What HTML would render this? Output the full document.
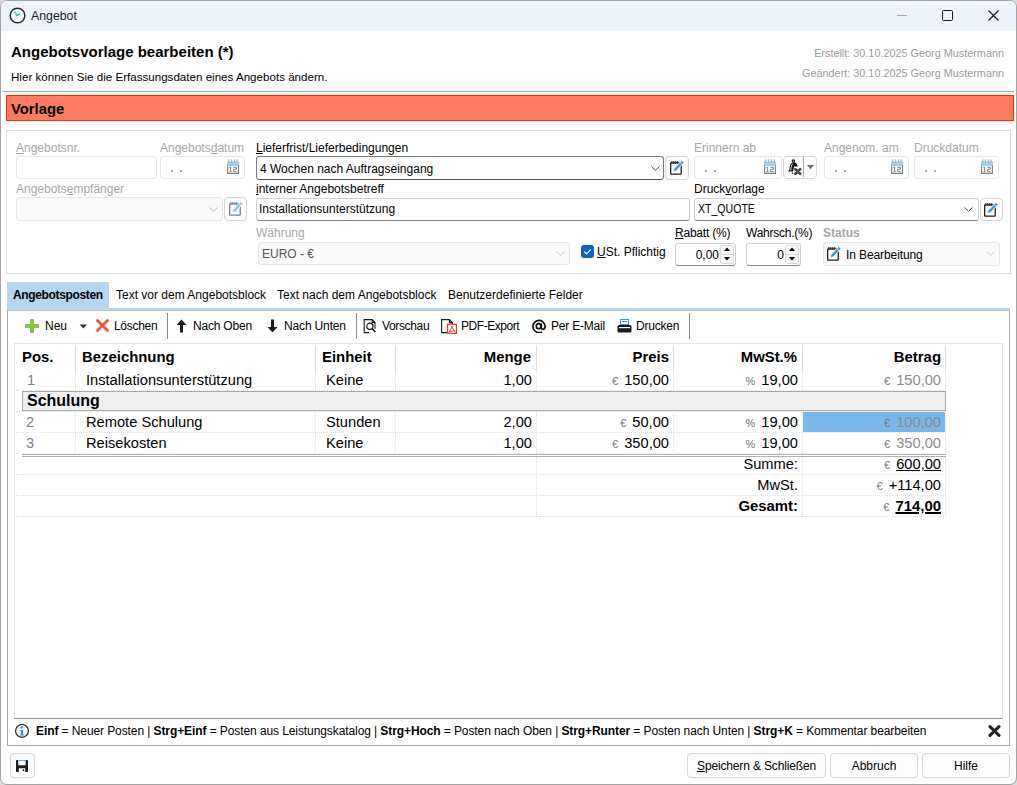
<!DOCTYPE html>
<html><head><meta charset="utf-8">
<style>
*{box-sizing:border-box;margin:0;padding:0}
html,body{width:1017px;height:785px;overflow:hidden;background:#dcdcdc}
body{font-family:"Liberation Sans",sans-serif;font-size:12px;color:#000;position:relative}
.a{position:absolute;white-space:nowrap}
#win{position:absolute;left:0;top:0;width:1017px;height:785px;background:#fff;border:1px solid #9a9a9a;border-radius:8px;overflow:hidden}
#tb{position:absolute;left:0;top:0;width:1015px;height:30px;background:#eef3f9}
.lbl{position:absolute;white-space:nowrap;font-size:12px;line-height:14px}
.dis{color:#a6a6a6}
.inp{position:absolute;border:1px solid #e8e8e8;border-radius:3px;background:#fff}
.inpd{position:absolute;border:1px solid #e6e6e6;border-radius:3px;background:#f9f9f9}
.act{position:absolute;border:1px solid #d0d0d0;border-bottom:1px solid #868686;border-radius:3px;background:#fff}
.btn{position:absolute;border:1px solid #d6d6d6;border-radius:4px;background:#fdfdfd}
.txt{position:absolute;white-space:nowrap;font-size:12px;line-height:14px}
u{text-decoration:underline;text-underline-offset:1px}
.g{position:absolute;white-space:nowrap;font-size:14.67px;line-height:16px}
.gb{font-weight:bold;font-size:14.9px}
.hl{position:absolute;height:0;border-top:1px dotted #e0e0e0}
.vl{position:absolute;width:0;border-left:1px dotted #e0e0e0}
.eur{font-size:11px;color:#777;margin-right:6px}
</style></head><body>
<div id="frame" style="position:absolute;left:0;top:0;width:1017px;height:785px;border:1px solid #a3a3a3;border-radius:7px;background:#fff;overflow:hidden">
  <div style="position:absolute;left:0;top:0;width:1015px;height:30px;background:#eef3f9"></div>
</div>
<!-- title bar -->
<svg class="a" style="left:9px;top:7px" width="17" height="17" viewBox="0 0 17 17"><circle cx="8.5" cy="8.5" r="7.3" fill="#fff" stroke="#1f2b33" stroke-width="1.5"/><path d="M5.6 4.6 L8 8.6 L11 6.6" fill="none" stroke="#3ab1c2" stroke-width="1.4"/></svg>
<div class="a" style="left:31px;top:9px;font-size:12.3px;line-height:14px;color:#1a1a1a">Angebot</div>
<div class="a" style="left:897px;top:15px;width:10px;height:1px;background:#a8a8a8"></div>
<div class="a" style="left:942px;top:10px;width:10.5px;height:10.5px;border:1.3px solid #1a1a1a;border-radius:1.5px"></div>
<svg class="a" style="left:988px;top:10px" width="11" height="11" viewBox="0 0 11 11"><path d="M0.5 0.5 L10.5 10.5 M10.5 0.5 L0.5 10.5" stroke="#1a1a1a" stroke-width="1.2"/></svg>
<!-- header -->
<div class="a" style="left:11px;top:43px;font-size:15px;line-height:17px;font-weight:bold;color:#000">Angebotsvorlage bearbeiten (*)</div>
<div class="a" style="left:11px;top:70px;font-size:11.6px;line-height:13px;color:#000">Hier können Sie die Erfassungsdaten eines Angebots ändern.</div>
<div class="a" style="right:13px;top:47px;font-size:10.85px;line-height:12px;color:#9a9a9a;text-align:right">Erstellt: 30.10.2025 Georg Mustermann</div>
<div class="a" style="right:13px;top:67px;font-size:10.85px;line-height:12px;color:#9a9a9a;text-align:right">Geändert: 30.10.2025 Georg Mustermann</div>
<div class="a" style="left:3px;top:91px;width:1011px;height:1px;background:#a8a8a8"></div>
<!-- Vorlage bar -->
<div class="a" style="left:6px;top:95px;width:1008px;height:26px;background:#ff7a62;border:1px solid #ff2a00"></div>
<div class="a" style="left:11px;top:101px;font-size:14.8px;line-height:16px;font-weight:bold;color:#000">Vorlage</div>

<!-- group box -->
<div class="a" style="left:6px;top:130px;width:1005px;height:144px;border:1px solid #dcdcdc;border-radius:0"></div>
<!-- row1 labels -->
<div class="lbl dis" style="left:16px;top:141px"><u>A</u>ngebotsnr.</div>
<div class="lbl dis" style="left:160px;top:141px">Angebots<u>d</u>atum</div>
<div class="lbl" style="left:256px;top:141px"><u>L</u>ieferfrist/Lieferbedingungen</div>
<div class="lbl dis" style="left:694px;top:141px">Erinnern ab</div>
<div class="lbl dis" style="left:824px;top:141px">Angenom. am</div>
<div class="lbl dis" style="left:914px;top:141px">Druckdatum</div>
<!-- row1 inputs -->
<div class="inp" style="left:16px;top:156px;width:141px;height:23px"></div>
<div class="inp" style="left:160px;top:156px;width:85px;height:23px"></div>
<div class="act" style="left:256px;top:156px;width:408px;height:24px;border-color:#7a7a7a;border-bottom-color:#5a5a5a"></div>
<div class="txt" style="left:260px;top:162px">4 Wochen nach Auftragseingang</div>
<div class="btn" style="left:665px;top:156px;width:24px;height:24px"></div>
<div class="inp" style="left:694px;top:156px;width:88px;height:23px"></div>
<div class="btn" style="left:783px;top:156px;width:34px;height:23px"></div>
<div class="inp" style="left:824px;top:156px;width:85px;height:23px"></div>
<div class="inp" style="left:914px;top:156px;width:85px;height:23px"></div>
<!-- row2 -->
<div class="lbl dis" style="left:16px;top:182px">Angebots<u>e</u>mpfänger</div>
<div class="lbl" style="left:256px;top:182px"><u>i</u>nterner Angebotsbetreff</div>
<div class="lbl" style="left:694px;top:182px">Druck<u>v</u>orlage</div>
<div class="inpd" style="left:16px;top:197px;width:207px;height:24px"></div>
<div class="btn" style="left:224px;top:197px;width:23px;height:24px"></div>
<div class="act" style="left:256px;top:198px;width:434px;height:23px"></div>
<div class="txt" style="left:259px;top:202px">Installationsunterstützung</div>
<div class="act" style="left:694px;top:198px;width:285px;height:23px"></div>
<div class="txt" style="left:698px;top:202px;transform:scaleX(0.88);transform-origin:0 0">XT_QUOTE</div>
<div class="btn" style="left:980px;top:198px;width:23px;height:23px"></div>
<!-- row3 -->
<div class="lbl dis" style="left:256px;top:226px">Währung</div>
<div class="lbl" style="left:675px;top:226px;letter-spacing:-0.22px"><u>R</u>abatt (%)</div>
<div class="lbl" style="left:746px;top:226px;letter-spacing:-0.25px">Wahrsch.(%)</div>
<div class="lbl dis" style="left:823px;top:226px;font-weight:bold">Status</div>
<div class="inpd" style="left:258px;top:242px;width:312px;height:23px"></div>
<div class="txt" style="left:262px;top:247px;color:#555">EURO - €</div>
<div class="a" style="left:581px;top:245px;width:13px;height:13px;background:#0f62c6;border-radius:3px"></div>
<svg class="a" style="left:581px;top:245px" width="13" height="13" viewBox="0 0 13 13"><path d="M3.2 6.6 L5.5 8.8 L9.8 4.4" fill="none" stroke="#fff" stroke-width="1.2"/></svg>
<div class="lbl" style="left:597px;top:245px"><u>U</u>St. Pflichtig</div>
<div class="act" style="left:675px;top:243px;width:61px;height:23px"></div>
<div class="txt" style="left:675px;top:248px;width:44px;text-align:right">0,00</div>
<div class="act" style="left:746px;top:243px;width:55px;height:23px"></div>
<div class="txt" style="left:746px;top:248px;width:38px;text-align:right">0</div>
<div class="inpd" style="left:823px;top:242px;width:177px;height:24px"></div>
<div class="txt" style="left:846px;top:248px;letter-spacing:-0.1px">In Bearbeitung</div>
<svg width="0" height="0" style="position:absolute">
 <defs>
  <g id="cal">
   <rect x="0" y="2.5" width="12" height="4.5" fill="#9fd0f0"/>
   <path d="M0.6 6.5 V14.4 H11.4 V6.5" fill="none" stroke="#7c7c7c" stroke-width="1.1"/>
   <path d="M1.9 0.3V3.6 M4.6 0.3V3.6 M7.4 0.3V3.6 M10.1 0.3V3.6" stroke="#8a8a8a" stroke-width="0.75"/>
   <path d="M2.4 8.6 L3.6 8 V12.6 M2.5 12.6 H4.7 M6.3 8.3 H9.3 V10.3 H6.6 V12.6 H9.6" fill="none" stroke="#808080" stroke-width="1"/>
  </g>
  <g id="edit">
   <path d="M6.3 6.85 H15.6 Q16.25 6.85 16.25 7.5 V17.5 Q16.25 18.15 15.6 18.15 H6.3 Q5.65 18.15 5.65 17.5 V7.5 Q5.65 6.85 6.3 6.85 Z" fill="#fff" stroke="#1e1e1e" stroke-width="1.3"/>
   <path d="M6.9 5 V7.8 M8.8 5 V7.8 M10.8 5 V7.8 M12.7 5 V7.8" stroke="#1e1e1e" stroke-width="1"/>
   <path d="M8.3 15.7 L9.04 12.6 L16.84 4.4 L19.16 6.6 L11.36 14.8 Z" fill="#3c9ad8" stroke="#fff" stroke-width="0.8" stroke-linejoin="round"/>
   <path d="M14.9 6.44 L17.2 8.64" stroke="#fff" stroke-width="0.7"/>
  </g>
  <g id="chev"><path d="M0.5 0.5 L4.5 4.3 L8.5 0.5" fill="none" stroke-width="1"/></g>
 </defs>
</svg>
<!-- calendars -->
<svg class="a" style="left:227px;top:159px" width="12" height="15"><use href="#cal"/></svg>
<svg class="a" style="left:764px;top:159px" width="12" height="15"><use href="#cal"/></svg>
<svg class="a" style="left:891px;top:159px" width="12" height="15"><use href="#cal"/></svg>
<svg class="a" style="left:981px;top:159px" width="12" height="15"><use href="#cal"/></svg>
<!-- date dots -->
<div class="a" style="left:171px;top:170px;width:2px;height:2px;background:#8c8aa6;border-radius:1px"></div>
<div class="a" style="left:180px;top:170px;width:2px;height:2px;background:#8c8aa6;border-radius:1px"></div>
<div class="a" style="left:705px;top:170px;width:2px;height:2px;background:#8c8aa6;border-radius:1px"></div>
<div class="a" style="left:714px;top:170px;width:2px;height:2px;background:#8c8aa6;border-radius:1px"></div>
<div class="a" style="left:835px;top:170px;width:2px;height:2px;background:#8c8aa6;border-radius:1px"></div>
<div class="a" style="left:844px;top:170px;width:2px;height:2px;background:#8c8aa6;border-radius:1px"></div>
<div class="a" style="left:925px;top:170px;width:2px;height:2px;background:#8c8aa6;border-radius:1px"></div>
<div class="a" style="left:934px;top:170px;width:2px;height:2px;background:#8c8aa6;border-radius:1px"></div>
<!-- edit icons -->
<svg class="a" style="left:665px;top:156px" width="24" height="24"><use href="#edit"/></svg>
<svg class="a" style="left:224px;top:197px" width="24" height="24" opacity="0.55"><use href="#edit"/></svg>
<svg class="a" style="left:979px;top:198px" width="24" height="24"><use href="#edit"/></svg>
<svg class="a" style="left:822px;top:242px" width="24" height="24"><use href="#edit"/></svg>
<!-- chevrons -->
<svg class="a" style="left:651px;top:166px" width="9" height="6" stroke="#505050"><use href="#chev"/></svg>
<svg class="a" style="left:209px;top:207px" width="9" height="6" stroke="#b8b8b8"><use href="#chev"/></svg>
<svg class="a" style="left:964px;top:207px" width="9" height="6" stroke="#505050"><use href="#chev"/></svg>
<svg class="a" style="left:556px;top:251px" width="9" height="6" stroke="#c8c8c8"><use href="#chev"/></svg>
<svg class="a" style="left:986px;top:251px" width="9" height="6" stroke="#c8c8c8"><use href="#chev"/></svg>
<!-- bell button -->
<div class="a" style="left:803px;top:157px;width:1px;height:20px;background:#a8a8a8"></div>
<svg class="a" style="left:785px;top:157px" width="18" height="20" viewBox="0 0 18 20"><path d="M8.4 5.3 C5.6 5.5 5 8.5 4.5 11.5 C4.2 13.2 3.8 13.8 3 14.5 H8 L9 9.4 H12.7 C12.3 7 10.8 5.3 8.4 5.3 Z" fill="#111"/><path d="M7.6 6.7 C6.4 8 6 11 5.7 13.6" stroke="#fff" stroke-width="0.9" fill="none"/><circle cx="8.4" cy="4.1" r="1.2" fill="#fff" stroke="#111" stroke-width="1.1"/><circle cx="7.4" cy="16.2" r="0.7" fill="#111"/><path d="M10.3 12.1 L15.2 16.8 M15.2 12.1 L10.3 16.8" stroke="#4a4a4a" stroke-width="2.7" stroke-linecap="round"/></svg>
<svg class="a" style="left:807px;top:165px" width="8" height="5"><path d="M0 0 H7 L3.5 4.2 Z" fill="#707070"/></svg>
<!-- spin buttons -->
<div class="a" style="left:720px;top:245px;width:14px;height:19px;border:1px solid #dadada;border-radius:2px;background:#fafafa"></div>
<div class="a" style="left:720px;top:254px;width:14px;height:1px;background:#dadada"></div>
<svg class="a" style="left:723px;top:247px" width="8" height="15"><path d="M1 4 L4 0.6 L7 4 Z M1 10 L4 13.4 L7 10 Z" fill="#000"/></svg>
<div class="a" style="left:785px;top:245px;width:14px;height:19px;border:1px solid #dadada;border-radius:2px;background:#fafafa"></div>
<div class="a" style="left:785px;top:254px;width:14px;height:1px;background:#dadada"></div>
<svg class="a" style="left:788px;top:247px" width="8" height="15"><path d="M1 4 L4 0.6 L7 4 Z M1 10 L4 13.4 L7 10 Z" fill="#000"/></svg>
<!-- tabs -->
<div class="a" style="left:7px;top:282px;width:102px;height:27px;background:#b5d6f0"></div>
<div class="a" style="left:7px;top:308px;width:1003px;height:2px;background:#b5d6f0"></div><div class="a" style="left:7px;top:310px;width:1003px;height:1px;background:#c4c4c4"></div>
<div class="a" style="left:13px;top:288px;font-size:12px;line-height:14px;font-weight:bold;letter-spacing:-0.35px">Angebotsposten</div>
<div class="a" style="left:116px;top:288px;font-size:12px;line-height:14px">Text vor dem Angebotsblock</div>
<div class="a" style="left:277px;top:288px;font-size:12px;line-height:14px">Text nach dem Angebotsblock</div>
<div class="a" style="left:448px;top:288px;font-size:12px;line-height:14px">Benutzerdefinierte Felder</div>
<!-- panel -->
<div class="a" style="left:7px;top:311px;width:1003px;height:435px;border:1px solid #a8a8a8;border-top:none"></div>
<!-- toolbar -->
<svg class="a" style="left:25px;top:319px" width="14" height="14"><path d="M5 0 H9 V5 H14 V9 H9 V14 H5 V9 H0 V5 H5 Z" fill="#8cbf4a"/></svg>
<div class="a" style="left:45px;top:319px;font-size:12px;line-height:14px">Neu</div>
<svg class="a" style="left:79px;top:324px" width="9" height="5"><path d="M0.5 0.5 H8 L4.25 4.5 Z" fill="#333"/></svg>
<svg class="a" style="left:96px;top:319px" width="13" height="13"><path d="M1.5 1.5 L11.5 11.5 M11.5 1.5 L1.5 11.5" stroke="#f0533a" stroke-width="2.8" stroke-linecap="round"/></svg>
<div class="a" style="left:114px;top:319px;font-size:12px;line-height:14px;letter-spacing:-0.3px">Löschen</div>
<div class="a" style="left:167px;top:313px;width:1px;height:26px;background:#888"></div>
<svg class="a" style="left:176px;top:319px" width="11" height="14"><path d="M5.5 0.5 L10.5 6 L7 6 V13.5 H4 V6 H0.5 Z" fill="#1a1a1a"/></svg>
<div class="a" style="left:193px;top:319px;font-size:12px;line-height:14px;letter-spacing:-0.2px">Nach Oben</div>
<svg class="a" style="left:267px;top:319px" width="11" height="14"><path d="M5.5 13.5 L10.5 8 L7 8 V0.5 H4 V8 H0.5 Z" fill="#1a1a1a"/></svg>
<div class="a" style="left:284px;top:319px;font-size:12px;line-height:14px;letter-spacing:-0.15px">Nach Unten</div>
<div class="a" style="left:356px;top:313px;width:1px;height:26px;background:#888"></div>
<svg class="a" style="left:363px;top:319px" width="14" height="15" viewBox="0 0 14 15"><path d="M6 13.6 H1.2 V0.6 H9.2 L12 3.4 V9.8 M9.2 0.6 V3.4 H12" fill="none" stroke="#1a1a1a" stroke-width="1.1"/><circle cx="6.9" cy="7.3" r="3.1" fill="#fff" stroke="#1a1a1a" stroke-width="1.2"/><path d="M9.1 9.5 L12.3 13" stroke="#1a1a1a" stroke-width="1.7"/></svg>
<div class="a" style="left:382px;top:319px;font-size:12px;line-height:14px;letter-spacing:-0.35px">Vorschau</div>
<svg class="a" style="left:441px;top:319px" width="16" height="15" viewBox="0 0 16 15"><path d="M6 13.6 H0.6 V0.6 H8.4 L11.4 3.6 V5 M8.4 0.6 V3.6 H11.4" fill="none" stroke="#1a1a1a" stroke-width="1.1"/><rect x="6.6" y="5.3" width="8.8" height="9" fill="#fff" stroke="#e02828" stroke-width="1.1"/><path d="M8.2 13 C9.6 11.2 10.6 9.2 11 7 C11.4 9.5 12.6 11.2 14.2 12 C12.4 11.6 10.2 12 8.2 13 Z" fill="none" stroke="#e02828" stroke-width="0.9"/></svg>
<div class="a" style="left:461px;top:319px;font-size:12px;line-height:14px;letter-spacing:-0.45px">PDF-Export</div>
<svg class="a" style="left:532px;top:319px" width="14" height="14" viewBox="0 0 14 14"><path d="M10 12.9 A6.1 6.1 0 1 1 13.1 7 Q13.1 10.3 10.9 10.3 Q9.3 10.3 9.3 8.6 V4.2" fill="none" stroke="#111" stroke-width="1.7"/><ellipse cx="6.6" cy="7.2" rx="2.3" ry="2.5" fill="none" stroke="#111" stroke-width="1.7"/></svg>
<div class="a" style="left:551px;top:319px;font-size:12px;line-height:14px;letter-spacing:-0.2px">Per E-Mail</div>
<svg class="a" style="left:617px;top:319px" width="15" height="14" viewBox="0 0 15 14"><rect x="3.5" y="0.5" width="8" height="5" fill="#fff" stroke="#3c9ad8"/><path d="M5 2.5 H10" stroke="#3c9ad8"/><rect x="0.5" y="6" width="14" height="7.5" rx="1.5" fill="#1a1a1a"/><rect x="2" y="8" width="11" height="1.2" fill="#fff"/></svg>
<div class="a" style="left:636px;top:319px;font-size:12px;line-height:14px;letter-spacing:-0.2px">Drucken</div>
<div class="a" style="left:689px;top:313px;width:1px;height:26px;background:#888"></div>
<!-- grid -->
<div class="a" style="left:14px;top:343px;width:989px;height:376px;border:1px solid #e6e6e6;border-bottom:1px solid #8a8a8a"></div>
<!-- header dividers -->
<div class="a" style="left:75px;top:345px;width:1px;height:25px;background:#dcdcdc"></div>
<div class="a" style="left:315px;top:345px;width:1px;height:25px;background:#dcdcdc"></div>
<div class="a" style="left:395px;top:345px;width:1px;height:25px;background:#dcdcdc"></div>
<div class="a" style="left:536px;top:345px;width:1px;height:25px;background:#dcdcdc"></div>
<div class="a" style="left:673px;top:345px;width:1px;height:25px;background:#dcdcdc"></div>
<div class="a" style="left:802px;top:345px;width:1px;height:25px;background:#dcdcdc"></div>
<div class="a" style="left:945px;top:345px;width:1px;height:25px;background:#dcdcdc"></div>
<!-- header texts -->
<div class="g gb" style="left:22px;top:349px">Pos.</div>
<div class="g gb" style="left:82px;top:349px">Bezeichnung</div>
<div class="g gb" style="left:322px;top:349px">Einheit</div>
<div class="g gb" style="left:395px;top:349px;width:136px;text-align:right">Menge</div>
<div class="g gb" style="left:536px;top:349px;width:133px;text-align:right">Preis</div>
<div class="g gb" style="left:673px;top:349px;width:124px;text-align:right">MwSt.%</div>
<div class="g gb" style="left:802px;top:349px;width:139px;text-align:right">Betrag</div>
<!-- dotted lines rows -->
<div class="hl" style="left:16px;top:390px;width:930px"></div>
<div class="hl" style="left:16px;top:432px;width:930px"></div>
<div class="hl" style="left:16px;top:453px;width:930px"></div>
<div class="hl" style="left:16px;top:474px;width:930px"></div>
<div class="hl" style="left:16px;top:495px;width:930px"></div>
<div class="hl" style="left:16px;top:516px;width:930px"></div>
<div class="hl" style="left:16px;top:411px;width:930px"></div>
<!-- vertical dotted -->
<div class="vl" style="left:75px;top:370px;height:21px"></div>
<div class="vl" style="left:315px;top:370px;height:21px"></div>
<div class="vl" style="left:395px;top:370px;height:21px"></div>
<div class="vl" style="left:536px;top:370px;height:21px"></div>
<div class="vl" style="left:673px;top:370px;height:21px"></div>
<div class="vl" style="left:802px;top:370px;height:21px"></div>
<div class="vl" style="left:945px;top:370px;height:21px"></div>
<div class="vl" style="left:75px;top:411px;height:43px"></div>
<div class="vl" style="left:315px;top:411px;height:43px"></div>
<div class="vl" style="left:395px;top:411px;height:43px"></div>
<div class="vl" style="left:536px;top:411px;height:43px"></div>
<div class="vl" style="left:673px;top:411px;height:43px"></div>
<div class="vl" style="left:802px;top:411px;height:43px"></div>
<div class="vl" style="left:945px;top:411px;height:43px"></div>
<div class="vl" style="left:536px;top:457px;height:60px"></div>
<div class="vl" style="left:802px;top:457px;height:60px"></div>
<div class="vl" style="left:945px;top:457px;height:60px"></div>
<!-- row 1 -->
<div class="g" style="left:27px;top:372px;color:#808080">1</div>
<div class="g" style="left:86px;top:372px">Installationsunterstützung</div>
<div class="g" style="left:326px;top:372px">Keine</div>
<div class="g" style="left:395px;top:372px;width:137px;text-align:right">1,00</div>
<div class="g" style="left:536px;top:372px;width:133px;text-align:right"><span class="eur">€</span>150,00</div>
<div class="g" style="left:673px;top:372px;width:125px;text-align:right"><span class="eur">%</span>19,00</div>
<div class="g" style="left:802px;top:372px;width:139px;text-align:right;color:#8a8a8a"><span class="eur">€</span>150,00</div>
<!-- group row -->
<div class="a" style="left:22px;top:391px;width:924px;height:20px;background:#f0f0f0;border:1px solid #a8a8a8"></div>
<div class="a" style="left:27px;top:392px;font-size:16px;line-height:18px;font-weight:bold">Schulung</div>
<!-- row 2 -->
<div class="a" style="left:803px;top:412px;width:142px;height:20px;background:#7ab7ea"></div>
<div class="g" style="left:26px;top:414px;color:#808080">2</div>
<div class="g" style="left:86px;top:414px">Remote Schulung</div>
<div class="g" style="left:326px;top:414px">Stunden</div>
<div class="g" style="left:395px;top:414px;width:137px;text-align:right">2,00</div>
<div class="g" style="left:536px;top:414px;width:133px;text-align:right"><span class="eur">€</span>50,00</div>
<div class="g" style="left:673px;top:414px;width:125px;text-align:right"><span class="eur">%</span>19,00</div>
<div class="g" style="left:802px;top:414px;width:139px;text-align:right;color:#8a8a8a"><span class="eur">€</span>100,00</div>
<!-- row 3 -->
<div class="g" style="left:26px;top:435px;color:#808080">3</div>
<div class="g" style="left:86px;top:435px">Reisekosten</div>
<div class="g" style="left:326px;top:435px">Keine</div>
<div class="g" style="left:395px;top:435px;width:137px;text-align:right">1,00</div>
<div class="g" style="left:536px;top:435px;width:133px;text-align:right"><span class="eur">€</span>350,00</div>
<div class="g" style="left:673px;top:435px;width:125px;text-align:right"><span class="eur">%</span>19,00</div>
<div class="g" style="left:802px;top:435px;width:139px;text-align:right;color:#8a8a8a"><span class="eur">€</span>350,00</div>
<!-- double line -->
<div class="a" style="left:22px;top:454px;width:924px;height:1px;background:#b0b0b0"></div>
<div class="a" style="left:22px;top:456px;width:924px;height:1px;background:#b0b0b0"></div>
<!-- summary -->
<div class="g" style="left:673px;top:456px;width:125px;text-align:right">Summe:</div>
<div class="g" style="left:802px;top:456px;width:139px;text-align:right"><span class="eur">€</span><span style="text-decoration:underline">600,00</span></div>
<div class="g" style="left:673px;top:477px;width:125px;text-align:right">MwSt.</div>
<div class="g" style="left:802px;top:477px;width:139px;text-align:right"><span class="eur">€</span>+114,00</div>
<div class="g gb" style="left:673px;top:498px;width:125px;text-align:right">Gesamt:</div>
<div class="g gb" style="left:802px;top:498px;width:139px;text-align:right"><span class="eur" style="font-weight:normal">€</span><span style="text-decoration:underline;text-decoration-thickness:2px">714,00</span></div>
<!-- info bar -->
<svg class="a" style="left:15px;top:724px" width="14" height="14" viewBox="0 0 14 14"><circle cx="7" cy="6.9" r="6.4" fill="#fff" stroke="#1e1e1e" stroke-width="1.2"/><circle cx="6.9" cy="3.5" r="1.3" fill="#2f8fd8"/><path d="M5.1 6.1 H8 V10.5 H9.3 V11.6 H4.7 V10.5 H5.9 V7.1 H5.1 Z" fill="#2f8fd8"/></svg>
<div class="a" id="info" style="left:36px;top:724px;font-size:12px;line-height:14px;letter-spacing:-0.09px"><b>Einf</b> = Neuer Posten | <b>Strg+Einf</b> = Posten aus Leistungskatalog | <b>Strg+Hoch</b> = Posten nach Oben | <b>Strg+Runter</b> = Posten nach Unten | <b>Strg+K</b> = Kommentar bearbeiten</div>
<svg class="a" style="left:988px;top:725px" width="13" height="12" viewBox="0 0 13 12"><path d="M2 1.6 L11 10.4 M11 1.6 L2 10.4" stroke="#222" stroke-width="3" stroke-linecap="round"/></svg>
<!-- bottom -->
<div class="btn" style="left:10px;top:753px;width:25px;height:25px"></div>
<svg class="a" style="left:16px;top:760px" width="12" height="12" viewBox="0 0 12 12"><path d="M0.8 0 H11.2 Q12 0 12 0.8 V11.2 Q12 12 11.2 12 H0.8 Q0 12 0 11.2 V0.8 Q0 0 0.8 0 Z M2.2 0 V5.2 H9.6 V0 Z M2.8 8.2 V12 H9.2 V8.2 Z" fill="#1e1e1e" fill-rule="evenodd"/><rect x="2.6" y="0.2" width="6.8" height="0.9" fill="#3c9ad8"/><rect x="6.7" y="9.2" width="1.5" height="1.8" fill="#1e1e1e"/></svg>
<div class="btn" style="left:687px;top:753px;width:139px;height:25px"></div>
<div class="a" style="left:687px;top:759px;width:139px;text-align:center;font-size:12px;line-height:14px;letter-spacing:-0.15px"><u>S</u>peichern &amp; Schließen</div>
<div class="btn" style="left:830px;top:753px;width:88px;height:25px"></div>
<div class="a" style="left:830px;top:759px;width:88px;text-align:center;font-size:12px;line-height:14px">Abbruch</div>
<div class="btn" style="left:922px;top:753px;width:88px;height:25px"></div>
<div class="a" style="left:922px;top:759px;width:88px;text-align:center;font-size:12px;line-height:14px">Hilfe</div>
</body></html>
